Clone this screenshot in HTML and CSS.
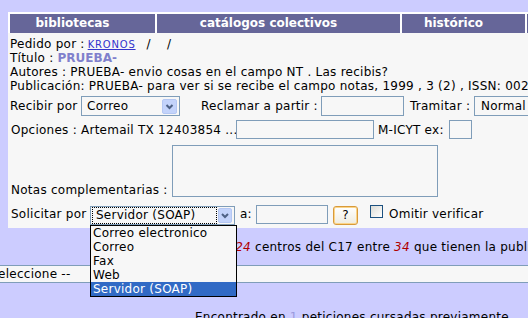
FILE: index.html
```html
<!DOCTYPE html>
<html lang="es">
<head>
<meta charset="utf-8">
<title>Petición</title>
<link rel="stylesheet" href="styles.css">
</head>
<body>
<div class="page">
  <div class="panel">
    <div class="tabs">
      <div class="tab tab-bib">bibliotecas</div>
      <div class="tab tab-cat">catálogos colectivos</div>
      <div class="tab tab-his">histórico</div>
      <div class="tab tab-more"></div>
    </div>
    <div class="content">
      <div class="line">Pedido por :<a class="user" href="#">KRONOS</a><span class="slashes">/&nbsp;&nbsp;&nbsp;&nbsp;/</span></div>
      <div class="line">Título : <b class="title">PRUEBA-</b></div>
      <div class="line">Autores : PRUEBA- envio cosas en el campo NT . Las recibis?</div>
      <div class="line">Publicación: PRUEBA- para ver si se recibe el campo notas, 1999 , 3 (2) , ISSN: 0023-1234</div>

      <div class="row row-recibir">
        <span class="lbl lbl-recibir">Recibir por</span>
        <span class="select sel-recibir">
          <span class="sel-text">Correo</span>
          <svg class="arrow" width="15" height="15" viewBox="0 0 15 15"><rect x="0.5" y="0.5" width="14" height="14" rx="1.5" fill="#c3d3fb" stroke="#b4c7f3"/><path d="M4.5 6 L7.5 9 L10.5 6" fill="none" stroke="#4d6185" stroke-width="2"/></svg>
        </span>
        <span class="lbl lbl-reclamar">Reclamar a partir :</span>
        <span class="input in-reclamar"></span>
        <span class="lbl lbl-tramitar">Tramitar :</span>
        <span class="select sel-tramitar"><span class="sel-text">Normal</span></span>
      </div>

      <div class="row row-opciones">
        <span class="lbl lbl-opciones">Opciones : Artemail TX 12403854 ...</span>
        <span class="input in-opciones"></span>
        <span class="lbl lbl-micyt">M-ICYT ex:</span>
        <span class="input in-micyt"></span>
      </div>

      <div class="row row-notas">
        <span class="lbl lbl-notas">Notas complementarias :</span>
        <span class="textarea"></span>
      </div>

      <div class="row row-solicitar">
        <span class="lbl lbl-solicitar">Solicitar por</span>
        <span class="select sel-solicitar">
          <span class="sel-text focus">Servidor (SOAP)</span>
          <svg class="arrow" width="14" height="15" viewBox="0 0 14 15"><rect x="0.5" y="0.5" width="13" height="14" rx="1.5" fill="#c3d3fb" stroke="#b4c7f3"/><path d="M4 6 L7 9 L10 6" fill="none" stroke="#4d6185" stroke-width="2"/></svg>
          <span class="dropdown">
            <span class="opt">Correo electronico</span>
            <span class="opt">Correo</span>
            <span class="opt">Fax</span>
            <span class="opt">Web</span>
            <span class="opt opt-sel">Servidor (SOAP)</span>
          </span>
        </span>
        <span class="lbl lbl-a">a:</span>
        <span class="input in-a"></span>
        <span class="btn">?</span>
        <span class="check"></span>
        <span class="lbl lbl-omitir">Omitir verificar</span>
      </div>
    </div>
  </div>

  <div class="centros"><span class="centros-pre">Localizada en </span><em class="num">24</em> centros del C17 entre <em class="num">34</em> que tienen la publicación</div>

  <div class="filter"><span class="filter-text">-- Seleccione --</span></div>

  <div class="encontrado">Encontrado en <span class="count">1</span> peticiones cursadas previamente</div>
</div>
</body>
</html>
```

FILE: styles.css
```css
html, body {
  margin: 0;
  padding: 0;
  overflow: hidden;
}
body {
  width: 528px;
  height: 318px;
  background: #ccccff;
  font-family: "DejaVu Sans", Verdana, sans-serif;
  font-size: 12px;
  letter-spacing: 0.25px;
  color: #000;
}
.page {
  padding-top: 12px;
}
.panel {
  margin-left: 8px;
  width: 580px;
  background: #f7f7f7;
}
.tabs {
  display: flex;
  gap: 2px;
  background: #fff;
  padding: 2px 0 0 2px;
  letter-spacing: 0;
}
.tab {
  height: 19px;
  line-height: 19px;
  background: #666699;
  color: #fff;
  font-weight: bold;
  text-align: center;
  padding-right: 20px;
  box-sizing: border-box;
  white-space: nowrap;
}
.tab-bib { width: 145px; }
.tab-cat { width: 243px; }
.tab-his { width: 123px; }
.tab-more { flex: 1; }

.content {
  padding: 4px 0 3px 2px;
}
.line {
  line-height: 14px;
  height: 14px;
  white-space: nowrap;
}
.user {
  color: #3333cc;
  font-size: 10px;
  letter-spacing: 0.8px;
  margin-left: 3px;
  margin-right: 11px;
}
.title {
  color: #8080cc;
  font-size: 12px;
  letter-spacing: 0;
}

.row {
  display: flex;
  white-space: nowrap;
}
.lbl {
  line-height: 14px;
  box-sizing: border-box;
  flex: none;
}
.select, .input, .textarea {
  box-sizing: border-box;
  border: 1px solid #7f9db9;
  flex: none;
}
.select {
  position: relative;
  display: flex;
  align-items: center;
  justify-content: space-between;
}
.sel-text {
  padding-left: 5px;
  line-height: 14px;
}
.arrow {
  display: block;
  margin-right: 2px;
}

.row-recibir {
  margin-top: 3px;
  height: 20px;
  align-items: center;
}
.lbl-recibir { width: 71px; }
.sel-recibir { width: 99px; height: 20px; }
.lbl-reclamar { width: 120px; margin-left: 21px; }
.in-reclamar { width: 83px; height: 20px; }
.lbl-tramitar { width: 70px; padding-left: 6px; }
.sel-tramitar { width: 100px; height: 20px; }
.sel-tramitar .sel-text { padding-left: 6px; }

.row-opciones {
  margin-top: 4px;
  height: 19px;
  align-items: center;
}
.lbl-opciones { width: 226px; padding-left: 1px; }
.in-opciones { width: 138px; height: 19px; }
.lbl-micyt { width: 75px; padding-left: 4px; }
.in-micyt { width: 23px; height: 19px; }

.row-notas {
  margin-top: 6px;
  align-items: flex-end;
}
.lbl-notas { width: 162px; padding-left: 1px; }
.textarea { width: 266px; height: 52px; }

.row-solicitar {
  margin-top: 8px;
  height: 20px;
  align-items: flex-start;
}
.row-solicitar .lbl {
  padding-top: 2px;
}
.lbl-solicitar { width: 80px; padding-left: 1px; }
.sel-solicitar {
  width: 145px;
  height: 19px;
  margin-top: 1px;
}
.sel-solicitar .sel-text {
  margin-left: 2px;
  padding-left: 3px;
  width: 123px;
  height: 15px;
  box-sizing: border-box;
}
.focus {
  outline: 1px dotted #000;
}
.dropdown {
  position: absolute;
  left: -1px;
  top: 18px;
  width: 147px;
  box-sizing: border-box;
  border: 1px solid #000;
  background: #f7f7f7;
  display: flex;
  flex-direction: column;
  z-index: 5;
}
.opt {
  height: 14px;
  line-height: 14px;
  padding-left: 2px;
}
.opt-sel {
  background: #316ac5;
  color: #fff;
}
.lbl-a { width: 21px; padding-left: 5px; }
.in-a { width: 72px; height: 19px; }
.btn {
  flex: none;
  box-sizing: border-box;
  width: 25px;
  height: 19px;
  margin-left: 5px;
  margin-top: 1px;
  border: 1px solid #d89a3a;
  border-radius: 3px;
  box-shadow: inset 0 0 0 1px #fbd58a;
  background: linear-gradient(#ffffff, #efece0);
  text-align: center;
  line-height: 17px;
}
.check {
  flex: none;
  box-sizing: border-box;
  width: 13px;
  height: 13px;
  margin-left: 12px;
  border: 1px solid #1c5180;
  background: linear-gradient(135deg, #dcdcd6, #ffffff);
}
.lbl-omitir { padding-left: 6px; }

.centros {
  height: 37px;
  box-sizing: border-box;
  padding: 12px 0 0 146px;
  line-height: 14px;
  white-space: nowrap;
}
.num {
  color: #b00000;
}
.filter {
  height: 18px;
  box-sizing: border-box;
  border-top: 1px solid #7f9db9;
  border-bottom: 1px solid #7f9db9;
  background: #f7f7f7;
  line-height: 16px;
  white-space: nowrap;
}
.filter-text {
  display: inline-block;
  margin-left: -23px;
}
.encontrado {
  padding: 27px 0 0 195px;
  line-height: 14px;
  white-space: nowrap;
}
.count {
  color: #9999dd;
}
```
